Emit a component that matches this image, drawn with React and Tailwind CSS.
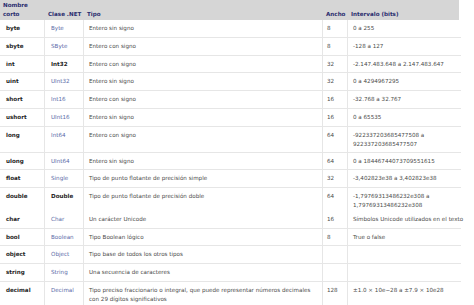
import React from "react";

const rows = [
  { n: "byte", c: "Byte", t: "Entero sin signo", w: "8", r: ["0 a 255"], h: "h-[18px]" },
  { n: "sbyte", c: "SByte", t: "Entero con signo", w: "8", r: ["-128 a 127"], h: "h-[18px]" },
  { n: "int", c: "Int32", cb: true, t: "Entero con signo", w: "32", r: ["-2.147.483.648 a 2.147.483.647"], h: "h-[17px]" },
  { n: "uint", c: "UInt32", t: "Entero sin signo", w: "32", r: ["0 a 4294967295"], h: "h-[18px]" },
  { n: "short", c: "Int16", t: "Entero con signo", w: "16", r: ["-32.768 a 32.767"], h: "h-[18px]" },
  { n: "ushort", c: "UInt16", t: "Entero sin signo", w: "16", r: ["0 a 65535"], h: "h-[18px]" },
  { n: "long", c: "Int64", t: "Entero con signo", w: "64", r: ["-922337203685477508 a", "922337203685477507"], h: "h-[26px]" },
  { n: "ulong", c: "UInt64", t: "Entero sin signo", w: "64", r: ["0 a 18446744073709551615"], h: "h-[17px]" },
  { n: "float", c: "Single", t: "Tipo de punto flotante de precisión simple", w: "32", r: ["-3,402823e38 a 3,402823e38"], h: "h-[18px]" },
  { n: "double", c: "Double", cb: true, t: "Tipo de punto flotante de precisión doble", w: "64", r: ["-1,79769313486232e308 a", "1,79769313486232e308"], h: "h-[23px]", nb: true },
  { n: "char", c: "Char", t: "Un carácter Unicode", w: "16", r: ["Símbolos Unicode utilizados en el texto"], h: "h-[18px]" },
  { n: "bool", c: "Boolean", t: "Tipo Boolean lógico", w: "8", r: ["True o false"], h: "h-[17px]" },
  { n: "object", c: "Object", t: "Tipo base de todos los otros tipos", w: "", r: [""], h: "h-[18px]" },
  { n: "string", c: "String", t: "Una secuencia de caracteres", w: "", r: [""], h: "h-[18px]" },
  {
    n: "decimal",
    c: "Decimal",
    t: ["Tipo preciso fraccionario o integral, que puede representar números decimales", "con 29 dígitos significativos"],
    w: "128",
    r: ["±1.0 × 10e−28 a ±7.9 × 10e28"],
    h: "h-[24px]",
    nb: true,
  },
];

export default function App() {
  return (
    <div
      className="w-[474px] h-[305px] overflow-hidden bg-white text-[5.6px] leading-[8.5px] text-[#4a4a4a]"
      style={{ fontFamily: '"DejaVu Sans", Verdana, sans-serif' }}
    >
      <div className="w-[461px]">
        <div className="flex h-[20px] bg-[#d6d6d6] items-end pb-[2px] font-bold text-[#2a2d6e] w-[459px]">
          <div className="w-[45px] shrink-0 pl-[3px]">
            <div>Nombre</div>
            <div>corto</div>
          </div>
          <div className="w-[39px] shrink-0 pl-[3px]">Clase .NET</div>
          <div className="w-[239px] shrink-0 pl-[3px]">Tipo</div>
          <div className="w-[25px] shrink-0 pl-[3px]">Ancho</div>
          <div className="flex-1 min-w-0 pl-[3px] whitespace-nowrap">Intervalo (bits)</div>
        </div>
        {rows.map((row) => (
          <div
            key={row.n}
            className={`flex ${row.h} ${row.nb ? "" : "border-b border-[#e6e6e6]"}`}
          >
            <div className="w-[45px] shrink-0 pl-[6px] pt-[4px] font-bold text-[#1e1e1e] border-r border-[#e6e6e6]">
              {row.n}
            </div>
            <div
              className={`w-[39px] shrink-0 pl-[6px] pt-[4px] border-r border-[#e6e6e6] ${
                row.cb ? "font-bold text-[#1e1e1e]" : "text-[#5a6aa8]"
              }`}
            >
              {row.c}
            </div>
            <div className="w-[239px] shrink-0 pl-[5px] pt-[4px] border-r border-[#e6e6e6] whitespace-nowrap">
              {Array.isArray(row.t) ? row.t.map((l) => <div key={l}>{l}</div>) : row.t}
            </div>
            <div className="w-[25px] shrink-0 pl-[4px] pt-[4px] border-r border-[#e6e6e6]">{row.w}</div>
            <div className="flex-1 min-w-0 pl-[5px] pt-[4px] whitespace-nowrap">
              {row.r.map((l, i) => (
                <div key={i}>{l}</div>
              ))}
            </div>
          </div>
        ))}
      </div>
    </div>
  );
}
